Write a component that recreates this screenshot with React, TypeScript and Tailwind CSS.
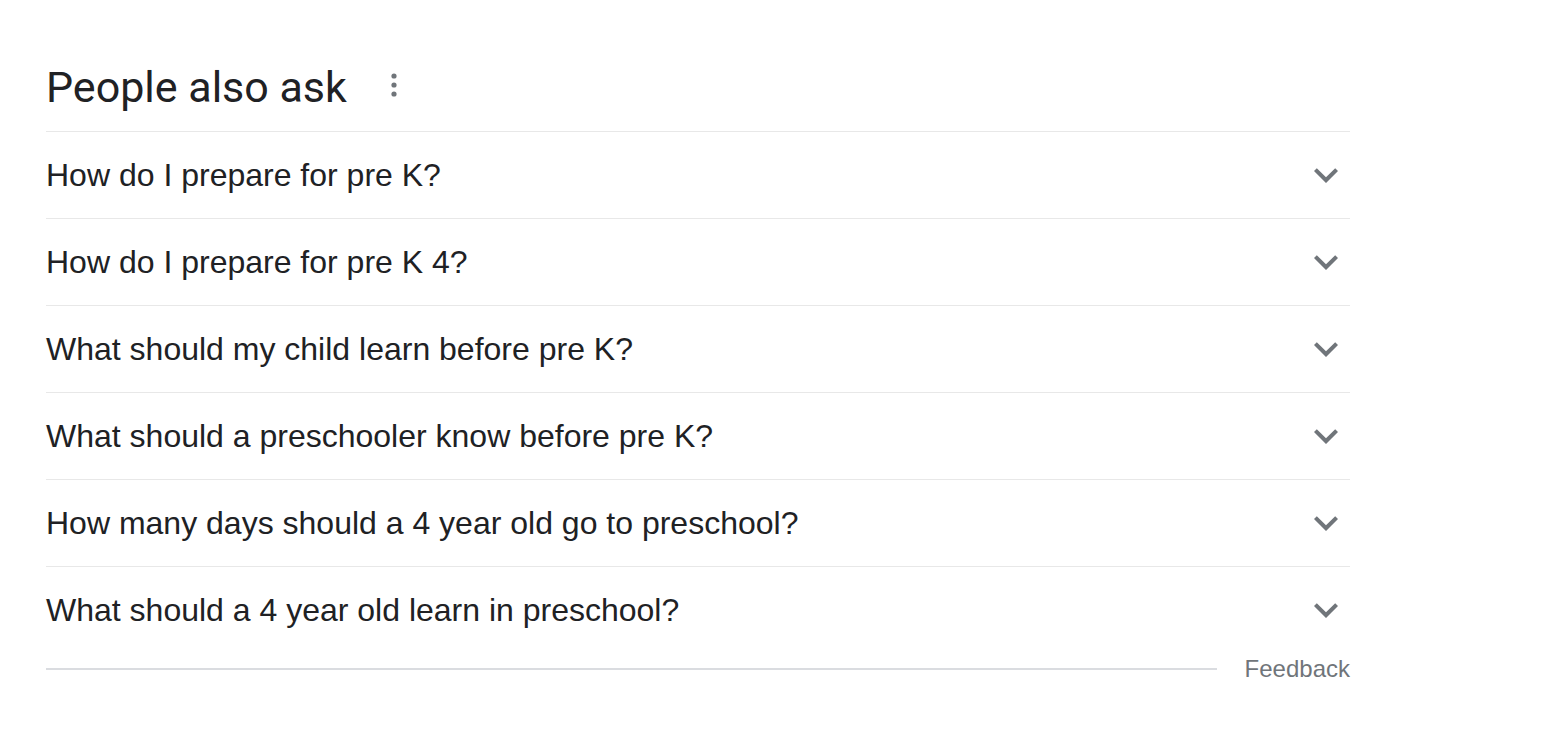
import React from "react";

const questions = [
  "How do I prepare for pre K?",
  "How do I prepare for pre K 4?",
  "What should my child learn before pre K?",
  "What should a preschooler know before pre K?",
  "How many days should a 4 year old go to preschool?",
  "What should a 4 year old learn in preschool?",
];

function Chevron() {
  return (
    <svg width="48" height="48" viewBox="0 0 24 24" className="shrink-0">
      <path d="M16.59 8.59L12 13.17 7.41 8.59 6 10l6 6 6-6z" fill="#70757a" />
    </svg>
  );
}

export default function App() {
  return (
    <div className="min-h-[748px] bg-white" style={{ fontFamily: "Arial, 'Liberation Sans', sans-serif" }}>
      <div className="ml-[46px] w-[1304px]">
        <div className="flex items-center pt-[63px] pb-[20px]">
          <h2 className="text-[43px] leading-[48px] text-[#202124] font-normal" style={{ fontFamily: "Roboto, 'Liberation Sans', sans-serif" }}>
            People also ask
          </h2>
          <svg width="12" height="30" viewBox="0 0 12 30" className="ml-[41px] mt-[-4px]">
            <circle cx="6" cy="6" r="2.6" fill="#70757a" />
            <circle cx="6" cy="15" r="2.6" fill="#70757a" />
            <circle cx="6" cy="24" r="2.6" fill="#70757a" />
          </svg>
        </div>
        {questions.map((q) => (
          <div key={q} className="flex h-[87px] items-center justify-between border-t border-[#e8e8e8]">
            <span className="text-[32px] text-[#202124]" style={{ fontFamily: "'Liberation Sans', Arial, sans-serif" }}>{q}</span>
            <Chevron />
          </div>
        ))}
        <div className="flex h-[30px] items-center mt-[1px]">
          <div className="h-[2px] flex-1 bg-[#dadce0]" />
          <span className="ml-[28px] text-[24px] text-[#70757a]" style={{ fontFamily: "'Liberation Sans', Arial, sans-serif" }}>Feedback</span>
        </div>
      </div>
    </div>
  );
}
